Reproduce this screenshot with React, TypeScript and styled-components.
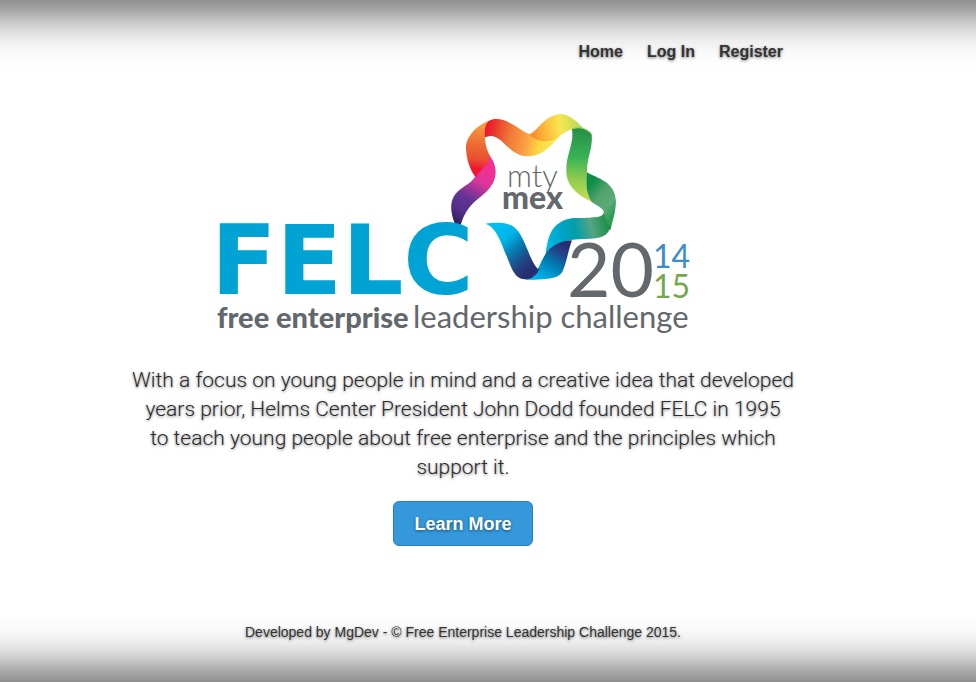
import React from "react";
import styled, { createGlobalStyle } from "styled-components";

const GlobalStyle = createGlobalStyle`
  *, *::before, *::after { box-sizing: border-box; }
  html, body, #root { height: 100%; }
  body {
    margin: 0;
    background: #fff;
    color: #333;
    font-family: "Helvetica Neue", "Liberation Sans", Arial, sans-serif;
    text-shadow: 0 1px 3px rgba(0, 0, 0, 0.5);
  }
`;

const shade = `
  rgba(0, 0, 0, 0.44) 0,
  rgba(0, 0, 0, 0.35) 10px,
  rgba(0, 0, 0, 0.24) 20px,
  rgba(0, 0, 0, 0.14) 30px,
  rgba(0, 0, 0, 0.07) 40px,
  rgba(0, 0, 0, 0.025) 52px,
  rgba(0, 0, 0, 0) 70px
`;

const Page = styled.div`
  display: flex;
  justify-content: center;
  min-height: 100%;
  padding-right: 50px;
  background: linear-gradient(to bottom, ${shade}), linear-gradient(to top, ${shade}), #fff;
`;

const Container = styled.div`
  display: flex;
  flex-direction: column;
  width: 100%;
  max-width: 700px;
`;

const Header = styled.header`
  display: flex;
  justify-content: flex-end;
  padding: 40px 30px 0;
`;

const Nav = styled.nav`
  display: flex;
  gap: 24px;
`;

const NavLink = styled.a`
  color: #333;
  font-size: 16px;
  font-weight: 700;
  line-height: 24px;
  text-decoration: none;
`;

const Cover = styled.main`
  display: flex;
  flex-direction: column;
  align-items: center;
  padding: 46px 10px 0;
`;

const Logo = styled.svg`
  display: block;
  width: 100%;
  max-width: 520px;
  height: auto;
  text-shadow: none;
`;

const Lead = styled.p`
  margin: 24px 0 19px;
  color: #2b2b2b;
  font-family: Roboto, "Liberation Sans", sans-serif;
  font-size: 21px;
  font-weight: 300;
  line-height: 29px;
  text-align: center;
`;

const PrimaryButton = styled.button`
  height: 45px;
  padding: 1px 20px 0;
  border: 1px solid #2a7fbd;
  border-radius: 6px;
  background: #3498db;
  color: #fff;
  font: inherit;
  font-size: 18px;
  font-weight: 700;
  text-shadow: inherit;
  cursor: pointer;
`;

const Footer = styled.footer`
  margin-top: auto;
  padding-bottom: 40px;
  font-size: 14px;
  line-height: 20px;
  text-align: center;
`;

const Wordmark = styled.text`
  fill: #00a3d3;
  font: 700 96px "DejaVu Sans", sans-serif;
`;

const LogoText = styled.text<{ $size: number; $weight: number; $color?: string }>`
  fill: ${(p) => p.$color ?? "#63686c"};
  font-family: Lato, sans-serif;
  font-size: ${(p) => p.$size}px;
  font-weight: ${(p) => p.$weight};
`;

type Stops = [string, string][];

const Gradient = ({ id, from, to, stops }: { id: string; from: [number, number]; to: [number, number]; stops: Stops }) => (
  <linearGradient id={id} gradientUnits="userSpaceOnUse" x1={from[0]} y1={from[1]} x2={to[0]} y2={to[1]}>
    {stops.map(([offset, color]) => (
      <stop key={offset} offset={offset} stopColor={color} />
    ))}
  </linearGradient>
);

const Ribbon = () => (
  <g transform="translate(440 105) scale(0.3333)">
    <defs>
      <Gradient id="violet" from={[150, 180]} to={[50, 350]} stops={[["0", "#f2308f"], ["0.28", "#e0359a"], ["0.6", "#643494"], ["0.82", "#51308a"], ["1", "#35205c"]]} />
      <Gradient id="ember" from={[125, 65]} to={[105, 215]} stops={[["0", "#f59a3c"], ["0.35", "#ee6c35"], ["0.65", "#e8502f"], ["0.85", "#f0152c"], ["1", "#ef1c3b"]]} />
      <Gradient id="sunrise" from={[135, 70]} to={[345, 110]} stops={[["0", "#ee1030"], ["0.12", "#e8332c"], ["0.35", "#ef7737"], ["0.6", "#fba042"], ["0.78", "#fdd63f"], ["1", "#f5ee58"]]} />
      <Gradient id="lemon" from={[280, 80]} to={[440, 55]} stops={[["0", "#f9902d"], ["0.22", "#fdb93c"], ["0.5", "#f8e650"], ["0.8", "#c7dc55"], ["1", "#9bcb4c"]]} />
      <Gradient id="leaf" from={[430, 75]} to={[420, 285]} stops={[["0", "#27904a"], ["0.4", "#39b355"], ["0.7", "#8fcb50"], ["1", "#c5df4d"]]} />
      <Gradient id="forest" from={[440, 250]} to={[525, 320]} stops={[["0", "#0d8e48"], ["0.4", "#52a36c"], ["0.75", "#5cab78"], ["1", "#309b55"]]} />
      <Gradient id="lagoon" from={[325, 410]} to={[510, 370]} stops={[["0", "#00b7e6"], ["0.25", "#00a3c4"], ["0.45", "#009fab"], ["0.72", "#55a581"], ["1", "#178f43"]]} />
      <Gradient id="deep" from={[372, 420]} to={[310, 522]} stops={[["0", "#252f74"], ["0.25", "#20478c"], ["0.55", "#007cb3"], ["1", "#00b0e6"]]} />
      <Gradient id="ocean" from={[165, 380]} to={[275, 500]} stops={[["0", "#00bdf2"], ["0.25", "#00b2e6"], ["0.5", "#0779ae"], ["0.78", "#24417f"], ["1", "#252c70"]]} />
    </defs>
    <path fill="url(#violet)" d="M47 360C38 344 32 318 34 298C37 267 62 251 84 237C96 230 101 220 107 214C108 180 130 156 149 152C160 166 167 182 167 202C166 237 145 257 120 277C92 298 73 323 62 360Z" />
    <path fill="url(#ember)" d="M107 217C89 193 78 158 78 126C80 92 112 57 160 43L142 65L135 95C135 120 142 137 150 153C146 180 121 193 107 217Z" />
    <path fill="url(#sunrise)" d="M135 97C133 77 134 47 160 43C202 37 237 75 269 88C296 108 330 109 350 93L358 97C332 120 311 154 262 154C207 153 190 92 150 93Z" />
    <path fill="url(#lemon)" d="M267 89C296 76 314 28 365 27C398 29 421 65 452 87L447 88C432 69 415 67 398 72C375 78 357 96 343 104C317 113 286 107 267 89Z" />
    <path fill="#f6a93a" opacity="0.7" d="M267 89C286 107 316 111 345 97C321 112 290 111 267 89Z" />
    <path fill="url(#leaf)" d="M396 72C416 65 440 70 455 88C460 130 438 163 441 207C437 239 440 266 456 291C416 271 379 246 379 197C377 151 404 114 396 72Z" />
    <path fill="none" stroke="#9fcf51" strokeWidth="3" d="M397 71C416 65 434 68 452 83" />
    <path fill="url(#forest)" d="M441 202C471 221 526 228 528 290C526 329 516 352 512 374L472 365L450 338C473 337 492 336 492 323C491 309 470 302 455 291C439 265 437 239 441 202Z" />
    <path fill="url(#lagoon)" d="M317 447C323 405 329 348 400 339C442 337 491 343 492 320C492 338 504 365 512 361C508 394 480 402 438 402C389 401 344 411 317 447Z" />
    <path fill="url(#deep)" d="M316 448C331 423 363 406 396 406C384 438 379 477 367 501C355 522 316 524 256 524C278 508 292 499 301 477C308 462 312 455 316 448Z" />
    <path fill="url(#ocean)" d="M136 356C181 350 215 350 237 382C261 419 269 465 294 493C286 511 270 523 254 523C224 521 216 493 201 456C182 411 170 367 136 356Z" />
    <path fill="#2d1f68" d="M294 493C285 511 270 522 255 524C273 523 293 510 299 489Z" />
  </g>
);

const FelcLogo = () => (
  <Logo viewBox="203 110 520 232" role="img" aria-label="FELC free enterprise leadership challenge">
    <Ribbon />
    <Wordmark x="211" y="294">FELC</Wordmark>
    <LogoText x="507" y="187" $size={31} $weight={300}>mty</LogoText>
    <LogoText x="502" y="209" $size={32} $weight={900}>mex</LogoText>
    <LogoText x="567" y="297" $size={75} $weight={400}>20</LogoText>
    <LogoText x="653" y="268" $size={32} $weight={400} $color="#3c8dcb">14</LogoText>
    <LogoText x="653" y="298" $size={32} $weight={400} $color="#74a84a">15</LogoText>
    <LogoText x="217" y="328" $size={29} $weight={900}>free enterprise</LogoText>
    <LogoText x="413" y="328" $size={31} $weight={400}>leadership challenge</LogoText>
  </Logo>
);

export default function App() {
  return (
    <>
      <GlobalStyle />
      <Page>
        <Container>
          <Header>
            <Nav>
              <NavLink href="#home">Home</NavLink>
              <NavLink href="#login">Log In</NavLink>
              <NavLink href="#register">Register</NavLink>
            </Nav>
          </Header>
          <Cover>
            <FelcLogo />
            <Lead>
              With a focus on young people in mind and a creative idea that developed
              <br /> years prior, Helms Center President John Dodd founded FELC in 1995
              <br /> to teach young people about free enterprise and the principles which
              <br /> support it.
            </Lead>
            <PrimaryButton type="button">Learn More</PrimaryButton>
          </Cover>
          <Footer>Developed by MgDev - © Free Enterprise Leadership Challenge 2015.</Footer>
        </Container>
      </Page>
    </>
  );
}
